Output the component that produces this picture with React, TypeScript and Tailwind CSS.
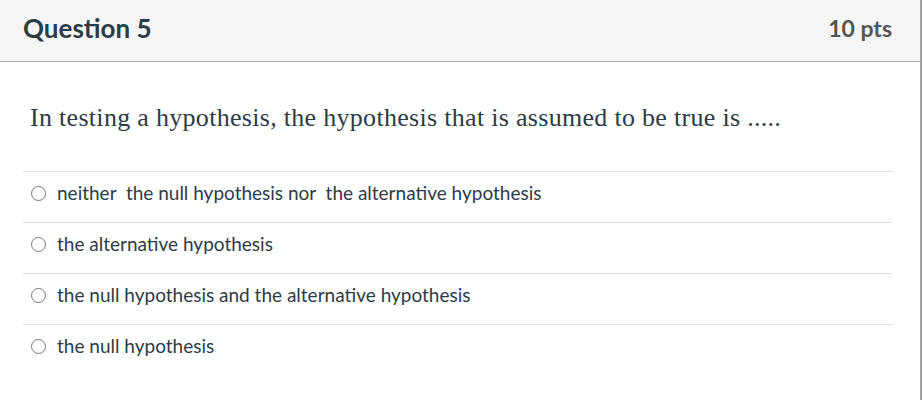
import React from 'react';

const answers = [
  'neither  the null hypothesis nor  the alternative hypothesis',
  'the alternative hypothesis',
  'the null hypothesis and the alternative hypothesis',
  'the null hypothesis',
];

export default function App() {
  return (
    <div className="w-[924px] h-[400px] bg-white overflow-hidden">
      <div className="w-[922px] h-full border-r-2 border-[#a0a0a0]">
        {/* header */}
        <div className="h-[62px] bg-[#f5f5f5] border-b border-[#a8a8a8] flex items-center justify-between pl-[23px] pr-[28px] font-['Lato','Liberation_Sans',sans-serif] font-bold">
          <h2 className="text-[26px] text-[#2d3b45] mt-[-4px]">Question 5</h2>
          <span className="text-[23px] text-[#555555] mt-[-4px]">10 pts</span>
        </div>

        {/* body */}
        <div className="pl-[23px] pr-[28px]">
          <p className="pt-[40px] pb-[37px] pl-[7px] text-[26px] tracking-[0.3px] text-[#2d3b45] font-['Liberation_Serif',serif] leading-[32px]">
            In testing a hypothesis, the hypothesis that is assumed to be true is .....
          </p>
          <div className="font-['Lato','Liberation_Sans',sans-serif] text-[19px] text-[#2d3b45]">
            {answers.map((a) => (
              <div key={a} className="h-[51px] border-t border-[#dcdcdc] flex items-center gap-[11px] pl-[8px] pb-[8px]">
                <span className="w-[15px] h-[15px] rounded-full border border-[#777] bg-white shrink-0" />
                <span className="whitespace-pre">{a}</span>
              </div>
            ))}
          </div>
        </div>
      </div>
    </div>
  );
}
